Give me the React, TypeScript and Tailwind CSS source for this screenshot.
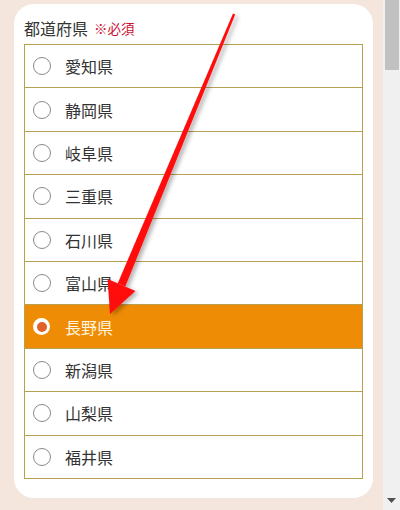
const prefectures = ["愛知県", "静岡県", "岐阜県", "三重県", "石川県", "富山県", "長野県", "新潟県", "山梨県", "福井県"];
const selected = "長野県";

function Radio({ checked }: { checked: boolean }) {
  if (checked) {
    return (
      <span className="w-[17px] h-[17px] rounded-full bg-white flex items-center justify-center shrink-0">
        <span className="w-[10px] h-[10px] rounded-full bg-[#e0622a]" />
      </span>
    );
  }
  return <span className="w-[18px] h-[18px] rounded-full border border-[#8a8a8a] bg-white shrink-0" />;
}

function Arrow() {
  return (
    <svg className="absolute inset-0 pointer-events-none" width="400" height="510" viewBox="0 0 400 510">
      <defs>
        <filter id="sh" x="-20%" y="-20%" width="140%" height="140%">
          <feDropShadow dx="3" dy="2" stdDeviation="2" floodColor="#000" floodOpacity="0.3" />
        </filter>
      </defs>
      <g filter="url(#sh)" fill="#ff0a0a">
        <polygon points="233,13.5 235.2,14.5 125.3,286.6 117.7,283.4" />
        <polygon points="110,314 107.6,279 135.4,291" />
      </g>
    </svg>
  );
}

export default function App() {
  return (
    <div
      className="relative w-[400px] h-[510px] flex bg-[#f4e6dc] overflow-hidden"
      style={{ fontFamily: '"Noto Sans CJK JP", "Noto Sans", sans-serif' }}
    >
      <div className="flex-1 pl-[14px] pt-[4px]">
        <div className="w-[359px] h-[494px] rounded-[20px] bg-white px-[10px] pt-[12px]">
          <div className="h-[24px] mb-[4px] flex items-center gap-[6px]">
            <span className="text-[16px] text-[#333]">都道府県</span>
            <span className="text-[13.5px] text-[#cc1133]">※必須</span>
          </div>
          <div className="w-[339px] border-t border-l border-r border-[#b8a052]">
            {prefectures.map((name) => {
              const on = name === selected;
              return (
                <div
                  key={name}
                  className={
                    on
                      ? "h-[43.4px] border-b border-[#b8a052] bg-[#ef8c06] flex items-center pl-[8px] gap-[15px]"
                      : "h-[43.4px] border-b border-[#b8a052] bg-white flex items-center pl-[8px] gap-[14px]"
                  }
                >
                  <Radio checked={on} />
                  <span className={on ? "text-[16px] text-[#fff4dc]" : "text-[16px] text-[#333]"}>{name}</span>
                </div>
              );
            })}
          </div>
        </div>
      </div>
      <div className="w-[17px] h-full bg-[#f0f0f0] flex flex-col items-center">
        <div className="w-[14px] h-[70px] bg-[#c1c1c1] ml-[1px]" />
        <div className="flex-1" />
        <svg className="mb-[7px]" width="9" height="5" viewBox="0 0 9 5">
          <polygon points="0,0 9,0 4.5,5" fill="#505050" />
        </svg>
      </div>
      <Arrow />
    </div>
  );
}
